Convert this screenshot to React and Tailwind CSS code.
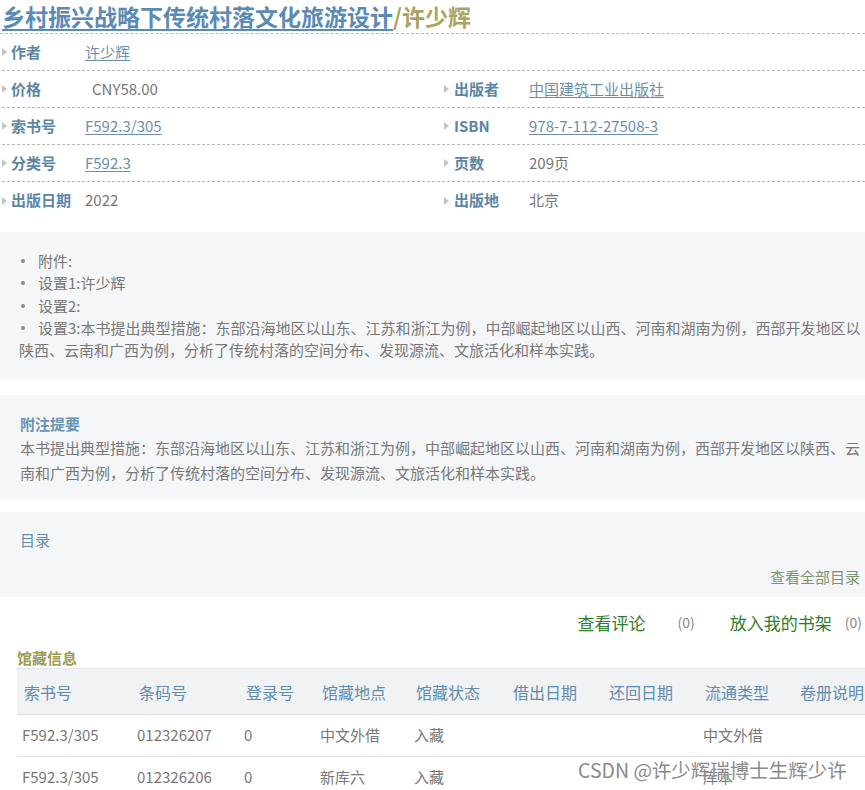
import React from "react";

const F = { fontFamily: '"Noto Sans CJK SC", "Noto Sans", sans-serif' };

function Arrow() {
  return (
    <svg width="5" height="8" viewBox="0 0 5 8" className="shrink-0">
      <path d="M0 0 L5 4 L0 8 Z" fill="#c4c4c4" />
    </svg>
  );
}

function Cell({ label, value, link, right, pad }) {
  return (
    <div className={`flex items-center h-full ${right ? "pl-[1px]" : ""}`}>
      <Arrow />
      <span className={`${right ? "ml-[5px] w-[75px]" : "ml-[4px] w-[74px]"} shrink-0 text-[15px] font-bold text-[#5b86a5]`}>
        {label}
      </span>
      {link ? (
        <span className="text-[15px] text-[#6b8fab] underline underline-offset-2">{value}</span>
      ) : (
        <span className={`text-[15px] text-[#777] ${pad ? "pl-[7px]" : ""}`}>{value}</span>
      )}
    </div>
  );
}

function Row({ children, last }) {
  return (
    <div className={`h-[37px] ${last ? "" : "border-b border-dashed border-[#b8b8b8]"}`}>
      {children}
    </div>
  );
}

function Bullet() {
  return (
    <span className="inline-flex w-[19px] justify-start items-center">
      <span className="ml-[2px] w-[4px] h-[4px] rounded-full bg-[#8a8a8a]" />
    </span>
  );
}

export default function App() {
  const heads = [
    ["索书号", "w-[115px]"],
    ["条码号", "w-[107px]"],
    ["登录号", "w-[76px]"],
    ["馆藏地点", "w-[94px]"],
    ["馆藏状态", "w-[97px]"],
    ["借出日期", "w-[96px]"],
    ["还回日期", "w-[96px]"],
    ["流通类型", "w-[95px]"],
    ["卷册说明", "w-[80px]"],
  ];
  const rows = [
    ["F592.3/305", "012326207", "0", "中文外借", "入藏", "", "", "中文外借", ""],
    ["F592.3/305", "012326206", "0", "新库六", "入藏", "", "", "库本", ""],
  ];
  return (
    <div className="w-[865px] h-[790px] overflow-hidden bg-white relative" style={F}>
      <div className="h-[34px] flex items-center pl-[2px] border-b border-dashed border-[#b8b8b8] whitespace-nowrap">
        <span className="text-[23px] font-bold text-[#5a8ab5] underline underline-offset-[3px] decoration-[2px] leading-none">
          乡村振兴战略下传统村落文化旅游设计
        </span>
        <span className="text-[23px] font-bold text-[#a9a364] leading-none">/许少辉</span>
      </div>

      <div className="pl-[2px]">
        <Row>
          <Cell label="作者" value="许少辉" link />
        </Row>
        <Row>
          <div className="grid grid-cols-[441px_1fr] h-full">
            <Cell label="价格" value="CNY58.00" pad />
            <Cell label="出版者" value="中国建筑工业出版社" link right />
          </div>
        </Row>
        <Row>
          <div className="grid grid-cols-[441px_1fr] h-full">
            <Cell label="索书号" value="F592.3/305" link />
            <Cell label="ISBN" value="978-7-112-27508-3" link right />
          </div>
        </Row>
        <Row>
          <div className="grid grid-cols-[441px_1fr] h-full">
            <Cell label="分类号" value="F592.3" link />
            <Cell label="页数" value="209页" right />
          </div>
        </Row>
        <Row last>
          <div className="grid grid-cols-[441px_1fr] h-full">
            <Cell label="出版日期" value="2022" />
            <Cell label="出版地" value="北京" right />
          </div>
        </Row>
      </div>

      <div className="mt-[13px] bg-[#f5f6f7] h-[148px] pt-[18px] pl-[19px] text-[15px] text-[#777] leading-[22.3px] whitespace-nowrap">
        <ul>
          {["附件:", "设置1:许少辉", "设置2:"].map((t) => (
            <li key={t} className="flex items-center">
              <Bullet />
              <span>{t}</span>
            </li>
          ))}
          <li className="flex items-center">
            <Bullet />
            <span>
              设置3:本书提出典型措施：东部沿海地区以山东、江苏和浙江为例，中部崛起地区以山西、河南和湖南为例，西部开发地区以
            </span>
          </li>
        </ul>
        <div>陕西、云南和广西为例，分析了传统村落的空间分布、发现源流、文旅活化和样本实践。</div>
      </div>

      <div className="mt-[15px] bg-[#f5f6f7] h-[105px] pt-[18px] pl-[20px] pr-[3px]">
        <div className="text-[15px] font-bold text-[#6a93b3] leading-[22px]">附注提要</div>
        <div className="text-[15px] text-[#777] leading-[25px]">
          本书提出典型措施：东部沿海地区以山东、江苏和浙江为例，中部崛起地区以山西、河南和湖南为例，西部开发地区以陕西、云南和广西为例，分析了传统村落的空间分布、发现源流、文旅活化和样本实践。
        </div>
      </div>

      <div className="mt-[12px] bg-[#f5f6f7] h-[85px] pt-[17px] pl-[20px] pr-[5px] flex flex-col">
        <div className="text-[15px] text-[#5f8aab] leading-[22px]">目录</div>
        <div className="mt-auto mb-[10px] self-end text-[15px] text-[#7a9472] leading-[20px]">查看全部目录</div>
      </div>

      <div className="h-[51px] flex items-center justify-end pr-[3px] whitespace-nowrap">
        <span className="text-[17px] text-[#2e7d2e]">查看评论</span>
        <span className="ml-[32px] text-[14px] text-[#888]">(0)</span>
        <span className="ml-[35px] text-[17px] text-[#2e7d2e]">放入我的书架</span>
        <span className="ml-[13px] text-[14px] text-[#888]">(0)</span>
      </div>

      <div className="pl-[17px] text-[15px] font-bold text-[#9f9a52] leading-[20px]">馆藏信息</div>

      <div className="ml-[17px] w-[900px] border-t border-[#e2e4e6]">
        <div className="flex bg-[#f0f2f4] h-[46px] items-center pl-[7px] border-b border-[#dfe1e3]">
          {heads.map(([h, w]) => (
            <div key={h} className={`${w} shrink-0 text-[16px] text-[#5f8bad]`}>{h}</div>
          ))}
        </div>
        {rows.map((r, i) => (
          <div key={i} className="flex h-[42px] items-center pl-[5px] border-b border-[#dfe1e3]">
            {r.map((c, j) => (
              <div key={j} className={`${heads[j][1]} shrink-0 text-[15px] text-[#777]`}>{c}</div>
            ))}
          </div>
        ))}
      </div>

      <div
        className="absolute left-[578px] top-[760px] text-[19.5px] leading-none text-[#8a8a8a] whitespace-nowrap"
        style={{ textShadow: "0 0 2px #fff" }}
      >
        CSDN @许少辉瑞博士生辉少许
      </div>
    </div>
  );
}
